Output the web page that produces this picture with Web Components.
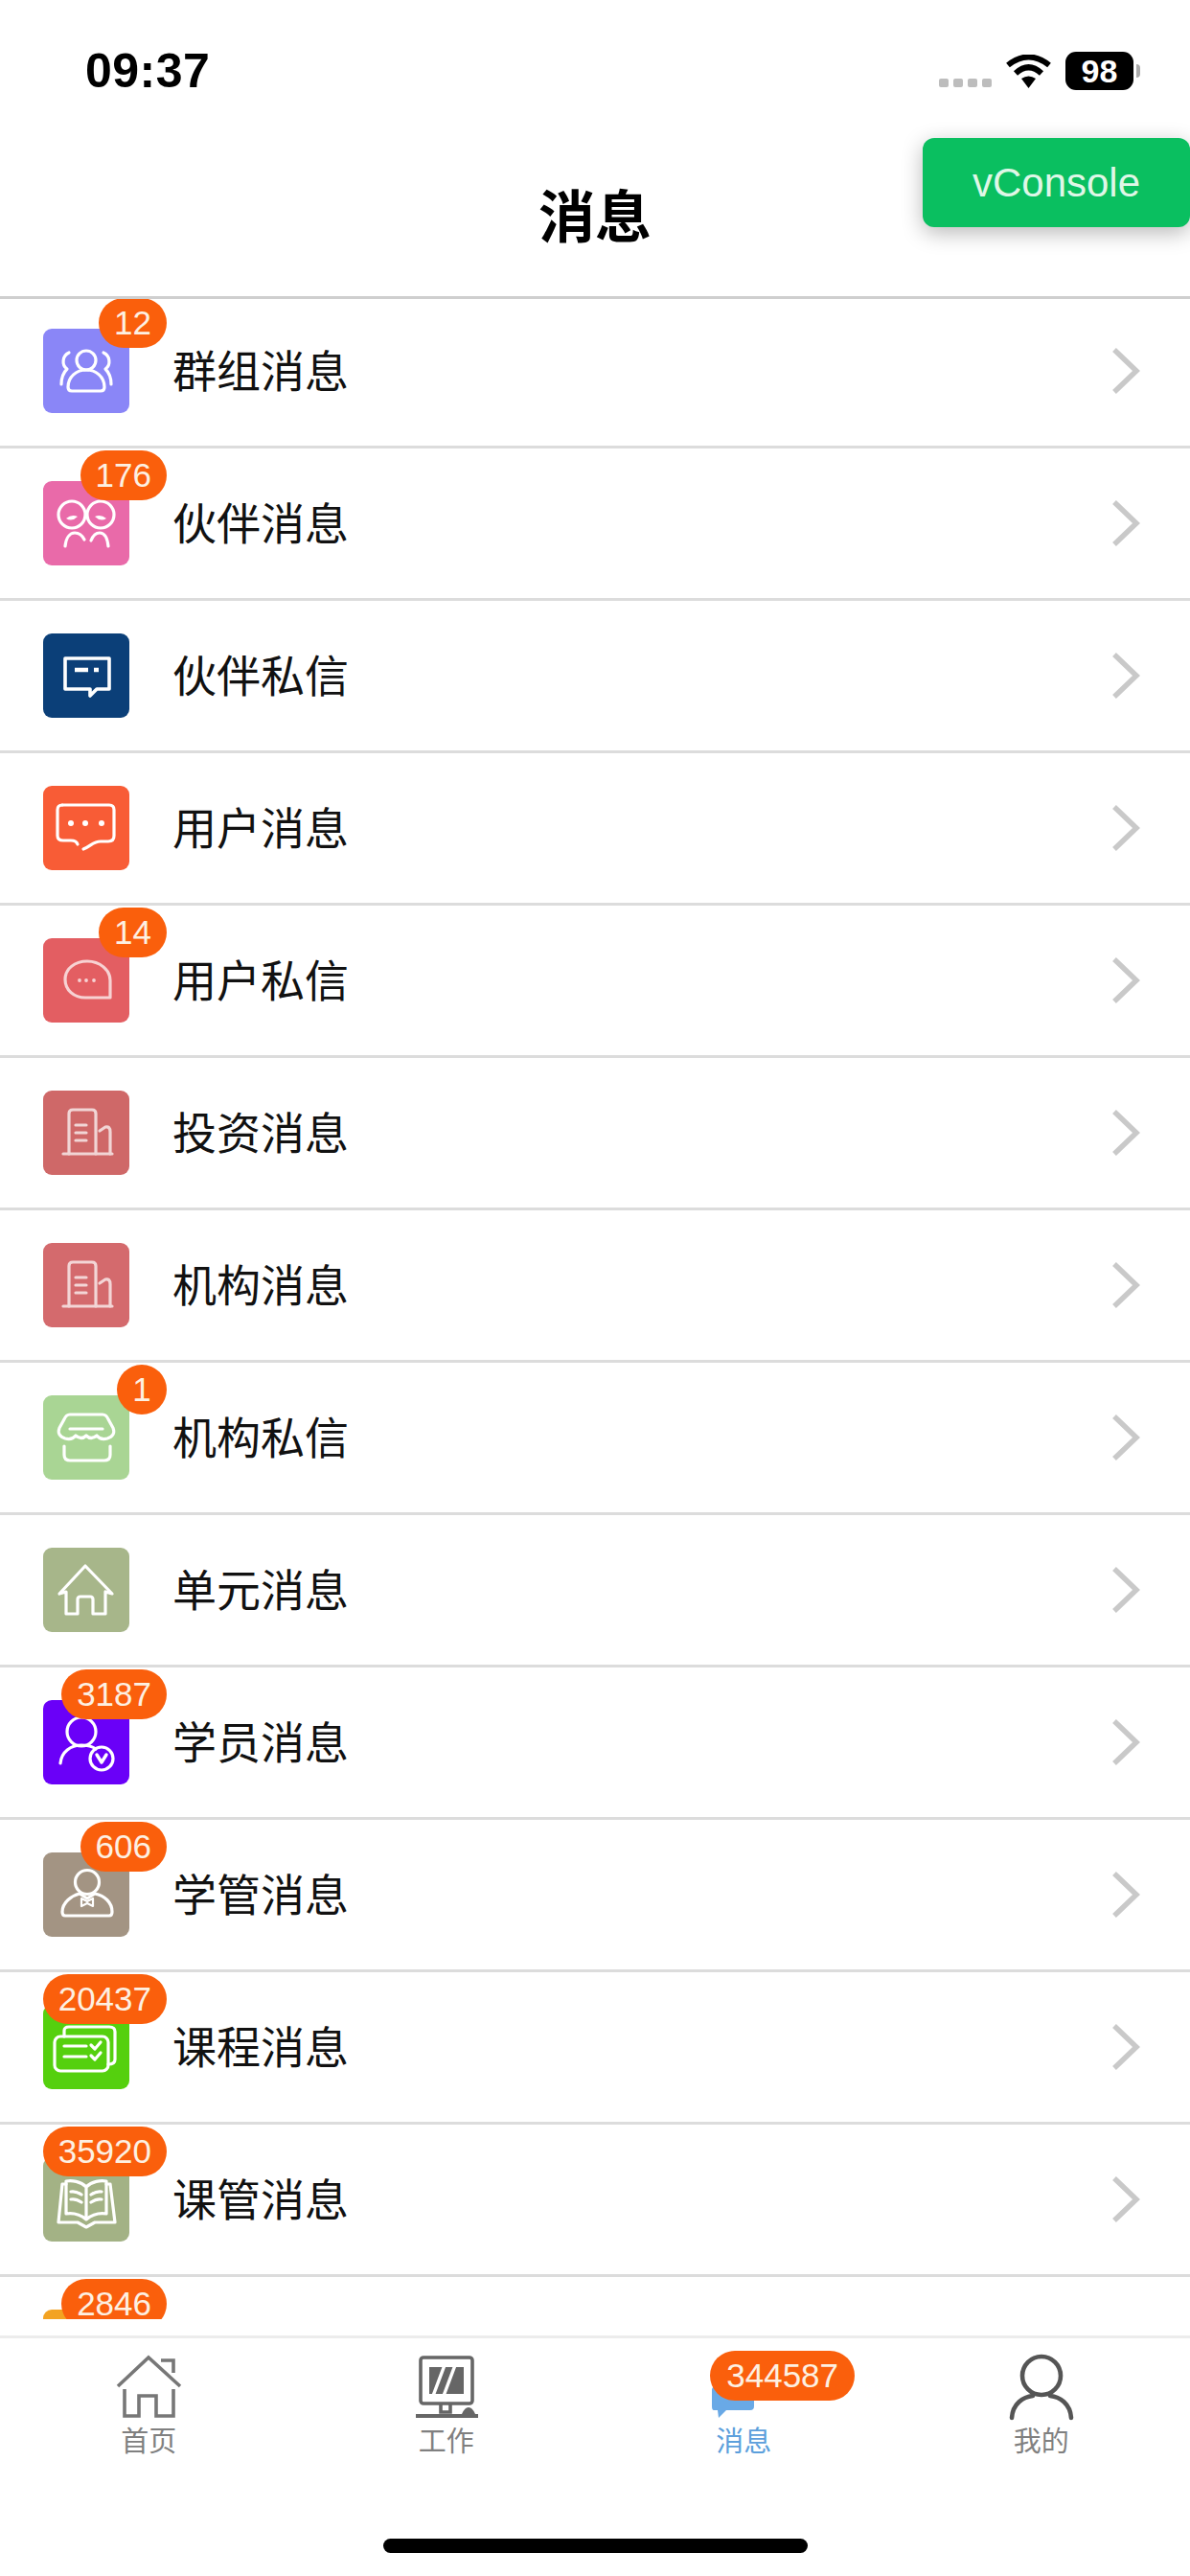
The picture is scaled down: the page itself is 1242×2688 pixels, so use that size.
<!DOCTYPE html>
<html lang="zh">
<head>
<meta charset="utf-8">
<title>消息</title>
<style>
  html, body { margin: 0; padding: 0; background: #fff; }
  body { font-family: "Liberation Sans", "Noto Sans CJK SC", sans-serif; }
</style>
</head>
<body>
<message-app>
  <status-bar slot="top" time="09:37" battery="98"></status-bar>
  <nav-header slot="top">消息</nav-header>
  <vconsole-button slot="top">vConsole</vconsole-button>

  <msg-row icon="group" bg="#8a86f7" count="12">群组消息</msg-row>
  <msg-row icon="partners" bg="#e96aa9" count="176">伙伴消息</msg-row>
  <msg-row icon="note" bg="#0b3f78">伙伴私信</msg-row>
  <msg-row icon="chat" bg="#f85c36">用户消息</msg-row>
  <msg-row icon="bubble" bg="#e35e62" count="14">用户私信</msg-row>
  <msg-row icon="building" bg="#cf6868">投资消息</msg-row>
  <msg-row icon="building" bg="#d46a6d">机构消息</msg-row>
  <msg-row icon="store" bg="#a9d594" count="1">机构私信</msg-row>
  <msg-row icon="house" bg="#a7b68a">单元消息</msg-row>
  <msg-row icon="student" bg="#6a00f8" count="3187">学员消息</msg-row>
  <msg-row icon="manager" bg="#a39483" count="606">学管消息</msg-row>
  <msg-row icon="course" bg="#55d00e" count="20437">课程消息</msg-row>
  <msg-row icon="book" bg="#a3b285" count="35920">课管消息</msg-row>
  <msg-row icon="" bg="#f3a322" count="2846"></msg-row>

  <tab-bar slot="bottom">
    <tab-item label="首页" icon="home"></tab-item>
    <tab-item label="工作" icon="work"></tab-item>
    <tab-item label="消息" icon="message" count="344587" active></tab-item>
    <tab-item label="我的" icon="me"></tab-item>
  </tab-bar>
  <home-indicator slot="bottom"></home-indicator>
</message-app>

<script>
// iconos de la lista, dibujados sobre un cuadro de 90x88
const rowIcons = {
  group: `<circle cx="45" cy="33" r="10"/>
    <path d="M30 65q-4 0-4-4C26 50 35 43 45 43s19 7 19 18q0 4-4 4Z"/>
    <path d="M27 25c-7 3-8 13-2 17-4 4-6 9-6 16"/><path d="M63 25c7 3 8 13 2 17 4 4 6 9 6 16"/>`,
  partners: `<circle cx="30" cy="35" r="14"/><circle cx="60" cy="35" r="14"/>
    <path d="M24 39q6-5 12-2-6 6-12 2Z" fill="currentColor" stroke="none"/>
    <path d="M54 37q6-3 12 2-6 4-12-2Z" fill="currentColor" stroke="none"/>
    <path d="M23 68c1-9 5-14 10-14s8 3 10 7"/><path d="M50 62c2-5 5-8 9-8 5 0 8 5 9 14"/>`,
  note: `<g stroke-width="3.6"><path d="M23 26H69V58H56L49 65V58H23Z"/></g>
    <path d="M33 38H47M53 38H58" stroke-width="4.5" stroke-linecap="butt"/>`,
  chat: `<path d="M20 20H69q5 0 5 5V52q0 6-6 6H60c-8 0-10 5-18 8"/>
    <path d="M20 20q-5 0-5 5V52q0 5 6 5H29c4 0 6 1 7 4"/>
    <g fill="currentColor" stroke="none"><circle cx="29" cy="39" r="3"/><circle cx="44" cy="39" r="3"/><circle cx="61" cy="39" r="3"/></g>`,
  bubble: `<path d="M46 24C59 24 70 33 70 44V62H44C32 62 23 54 23 43S33 24 46 24Z" opacity=".72"/>
    <g fill="currentColor" stroke="none" opacity=".72"><circle cx="38" cy="44" r="1.9"/><circle cx="45" cy="44" r="1.9"/><circle cx="53" cy="44" r="1.9"/></g>`,
  building: `<g opacity=".72"><path d="M27 66V24q0-4 4-4H51q4 0 4 4V66"/><path d="M21 66H72"/>
    <path d="M59 42l6-4q5-1 5 5V66"/><path d="M34 36H45M34 44H45M34 52H45"/></g>`,
  store: `<path d="M30 20H62q4 0 6 5l5 9q3 8-6 11-7 2-11-3-6 5-11 0-5 5-11 0-4 5-11 3-9-3-6-11l5-9q2-5 6-5Z"/>
    <path d="M28 35H62"/><path d="M22 53V62q0 6 6 6H64q6 0 6-6V53"/>`,
  house: `<path d="M17 48 44 19 72 48 65 46V69H52V54q0-3-3-3H39q-3 0-3 3V69H24V46Z"/>`,
  student: `<circle cx="40" cy="33" r="15"/><path d="M18 66c1-12 11-19 22-19 6 0 11 1 15 4"/>
    <circle cx="61" cy="61" r="12"/><path d="M56 57l5 8 5-8" stroke-width="3.4"/>`,
  manager: `<circle cx="46" cy="31" r="12.500"/>
    <path d="M23 66q-3 0-3-4C20 52 30 45 38 43L46 48 54 43C64 45 72 52 72 62q0 4-3 4Z"/>
    <path d="M40 48l6 3 6-3v8l-6-3-6 3Z" stroke-width="2.2"/>`,
  course: `<rect x="12" y="33" width="56" height="36" rx="6"/>
    <path d="M22 33V27q0-4 5-4H69q6 0 6 5V57q0 5-7 5"/>
    <path d="M22 43H45M22 54H45"/><path d="M50 42l4 4 6-7M50 53l4 4 6-7"/>`,
  book: `<path d="M45 31C39 25 30 24 24 25V59C31 58 39 60 45 65 51 60 59 58 66 59V25C60 24 51 25 45 31ZM45 31V65"/>
    <path d="M24 28H20L16 68H36L45 73 54 68H75L70 28H66"/>
    <path d="M29 36q5-1 11 3M29 44q5-1 11 3M50 39q6-4 11-3M50 47q6-4 11-3"/>`
};

// iconos de la barra inferior, cuadro de 90x84
const tabIcons = {
  home: `<g fill="none" stroke="#777" stroke-width="3.6">
    <path d="M13 45 45 15 78 45"/><path d="M58 18H71V31"/>
    <path d="M20 48V76H35V55H53V76H71V48"/></g>`,
  work: `<g fill="none" stroke="#666" stroke-width="3.6">
    <rect x="18" y="15" width="54" height="48" rx="3"/><path d="M39 63V72H49V63"/></g>
    <rect x="27" y="25" width="36" height="28" fill="#666"/>
    <path d="M43 23 31 55M54 23 42 55" stroke="#fff" stroke-width="3.5" fill="none"/>
    <path d="M13 74H78V78H13Z" fill="#666"/><path d="M61 74q3-7 7-7t7 7Z" fill="#666"/>`,
  message: `<path d="M14 44H52q4 0 4 4V66q0 4-4 4H27L19 78 18 70H14Q12 70 12 66V48Z" fill="#69a9e6"/>`,
  me: `<g fill="none" stroke="#555" stroke-width="4.6" stroke-linecap="round">
    <ellipse cx="45" cy="34" rx="20" ry="20"/><path d="M14 78C15 63 26 56 36 55M76 78C75 63 64 56 54 55"/></g>`
};

const appTemplate = document.createElement("template");
appTemplate.innerHTML = `
<style>
  :host { display: flex; flex-direction: column; width: 1242px; height: 2688px; background: #fff; overflow: hidden; position: relative; }
  .top { position: relative; z-index: 2; }
  .list { height: 2111px; margin-top: -3px; overflow: hidden; flex: none; }
  .bottom { flex: 1; display: flex; flex-direction: column; margin-top: 17px; }
</style>
<div class="top"><slot name="top"></slot></div>
<div class="list"><slot></slot></div>
<div class="bottom"><slot name="bottom"></slot></div>`;

class MessageApp extends HTMLElement {
  constructor() {
    super();
    this.attachShadow({ mode: "open" });
    this.shadowRoot.appendChild(appTemplate.content.cloneNode(true));
  }
}
customElements.define("message-app", MessageApp);

const statusTemplate = document.createElement("template");
statusTemplate.innerHTML = `
<style>
  :host { display: flex; align-items: center; justify-content: space-between; height: 148px; padding: 0 52px 0 89px; box-sizing: border-box; color: #000; }
  .time { font: 700 50px/1 "Liberation Sans", sans-serif; letter-spacing: .5px; }
  .right { display: flex; align-items: center; gap: 15px; }
  .signal { display: flex; gap: 5px; margin-top: 25px; }
  .signal i { width: 10px; height: 9px; border-radius: 2px; background: #bdbdbd; }
  .battery { display: flex; align-items: center; gap: 3px; }
  .cell { width: 71px; height: 40px; border-radius: 11px; background: #000; color: #fff; display: flex; align-items: center; justify-content: center; font: 700 34px/1 "Liberation Sans", sans-serif; }
  .nub { width: 4px; height: 14px; border-radius: 0 4px 4px 0; background: #aaa; }
  svg { display: block; }
</style>
<div class="time"></div>
<div class="right">
  <div class="signal"><i></i><i></i><i></i><i></i></div>
  <svg width="47" height="35" viewBox="0 0 47 35" fill="none" stroke="#000" stroke-width="6">
    <path d="M2 11Q23.500-6 45 11"/><path d="M10 19.500Q23.500 7 37 19.500"/>
    <path d="M16 25Q23.500 20 31 25L23.500 35Z" fill="#000" stroke="none"/>
  </svg>
  <div class="battery"><div class="cell"></div><div class="nub"></div></div>
</div>`;

class StatusBar extends HTMLElement {
  constructor() {
    super();
    this.attachShadow({ mode: "open" });
  }
  connectedCallback() {
    this.shadowRoot.appendChild(statusTemplate.content.cloneNode(true));
    this.shadowRoot.querySelector(".time").textContent = this.getAttribute("time");
    this.shadowRoot.querySelector(".cell").textContent = this.getAttribute("battery");
  }
}
customElements.define("status-bar", StatusBar);

const navTemplate = document.createElement("template");
navTemplate.innerHTML = `
<style>
  :host { display: flex; justify-content: center; align-items: center; height: 164px; padding-bottom: 12px; box-sizing: border-box; border-bottom: 3px solid #cfcfcf; background: #fff; }
  .title { font: 700 59px/1 "Noto Sans CJK SC", sans-serif; color: #000; }
</style>
<div class="title"><slot></slot></div>`;

class NavHeader extends HTMLElement {
  constructor() {
    super();
    this.attachShadow({ mode: "open" });
    this.shadowRoot.appendChild(navTemplate.content.cloneNode(true));
  }
}
customElements.define("nav-header", NavHeader);

const consoleTemplate = document.createElement("template");
consoleTemplate.innerHTML = `
<style>
  :host { position: absolute; top: 144px; right: 0; width: 279px; height: 93px; border-radius: 12px; background: #0abf60; color: #dff7e7; box-shadow: 0 6px 22px rgba(0,0,0,.28); display: flex; align-items: center; justify-content: center; font: 400 42px/1 "Liberation Sans", sans-serif; }
</style>
<slot></slot>`;

class VconsoleButton extends HTMLElement {
  constructor() {
    super();
    this.attachShadow({ mode: "open" });
    this.shadowRoot.appendChild(consoleTemplate.content.cloneNode(true));
  }
}
customElements.define("vconsole-button", VconsoleButton);

const badgeTemplate = document.createElement("template");
badgeTemplate.innerHTML = `
<style>
  :host { display: block; position: absolute; height: 52px; min-width: 52px; padding: 0 var(--badge-pad, 16px); box-sizing: border-box; border-radius: 26px; background: #fa5f0c; color: #fdf0e2; text-align: center; font: 400 35px/52px "Liberation Sans", sans-serif; white-space: nowrap; }
</style>
<slot></slot>`;

class CountBadge extends HTMLElement {
  constructor() {
    super();
    this.attachShadow({ mode: "open" });
    this.shadowRoot.appendChild(badgeTemplate.content.cloneNode(true));
  }
}
customElements.define("count-badge", CountBadge);

const rowTemplate = document.createElement("template");
rowTemplate.innerHTML = `
<style>
  :host { display: flex; align-items: center; gap: 45px; height: 159px; padding: 0 51px 0 45px; box-sizing: border-box; border-bottom: 3px solid #dcdcdc; position: relative; }
  .icon { position: relative; width: 90px; height: 88px; border-radius: 9px; color: #fff; flex: none; }
  .icon svg { display: block; width: 90px; height: 88px; fill: none; stroke: currentColor; stroke-width: 3.2; stroke-linejoin: round; stroke-linecap: round; }
  count-badge { right: -39px; top: -32px; }
  .label { flex: 1; padding-bottom: 6px; font: 400 46px/1 "Noto Sans CJK SC", sans-serif; color: #111; }
  .more { display: block; flex: none; }
</style>
<div class="icon"></div>
<div class="label"><slot></slot></div>
<svg class="more" width="32" height="50" viewBox="0 0 32 50" fill="none" stroke="#c9c9c9" stroke-width="5.5"><path d="M4 3 27 25 4 47"/></svg>`;

class MsgRow extends HTMLElement {
  constructor() {
    super();
    this.attachShadow({ mode: "open" });
  }
  connectedCallback() {
    this.shadowRoot.appendChild(rowTemplate.content.cloneNode(true));
    const icon = this.shadowRoot.querySelector(".icon");
    icon.style.background = this.getAttribute("bg");
    const glyph = rowIcons[this.getAttribute("icon")] || "";
    icon.innerHTML = `<svg viewBox="0 0 90 88">${glyph}</svg>`;

    const count = this.getAttribute("count");
    if (count) {
      const badge = document.createElement("count-badge");
      badge.textContent = count;
      icon.appendChild(badge);
    }
  }
}
customElements.define("msg-row", MsgRow);

const tabBarTemplate = document.createElement("template");
tabBarTemplate.innerHTML = `
<style>
  :host { display: grid; grid-template-columns: repeat(4, 1fr); border-top: 3px solid #ececec; padding-top: 5px; }
</style>
<slot></slot>`;

class TabBar extends HTMLElement {
  constructor() {
    super();
    this.attachShadow({ mode: "open" });
    this.shadowRoot.appendChild(tabBarTemplate.content.cloneNode(true));
  }
}
customElements.define("tab-bar", TabBar);

const tabTemplate = document.createElement("template");
tabTemplate.innerHTML = `
<style>
  :host { display: flex; flex-direction: column; align-items: center; color: #808080; }
  :host([active]) { color: #5c9fdc; }
  .pic { position: relative; width: 90px; height: 83px; }
  .pic svg { display: block; }
  count-badge { left: 10px; top: 8px; --badge-pad: 17px; }
  .name { font: 400 29px/34px "Noto Sans CJK SC", sans-serif; }
</style>
<div class="pic"></div>
<div class="name"></div>`;

class TabItem extends HTMLElement {
  constructor() {
    super();
    this.attachShadow({ mode: "open" });
  }
  connectedCallback() {
    this.shadowRoot.appendChild(tabTemplate.content.cloneNode(true));
    const pic = this.shadowRoot.querySelector(".pic");
    pic.innerHTML = `<svg width="90" height="84" viewBox="0 0 90 84">${tabIcons[this.getAttribute("icon")]}</svg>`;
    this.shadowRoot.querySelector(".name").textContent = this.getAttribute("label");

    const count = this.getAttribute("count");
    if (count) {
      const badge = document.createElement("count-badge");
      badge.textContent = count;
      pic.appendChild(badge);
    }
  }
}
customElements.define("tab-item", TabItem);

const indicatorTemplate = document.createElement("template");
indicatorTemplate.innerHTML = `
<style>
  :host { display: block; width: 443px; height: 15px; border-radius: 8px; background: #000; margin: auto auto 24px; }
</style>`;

class HomeIndicator extends HTMLElement {
  constructor() {
    super();
    this.attachShadow({ mode: "open" });
    this.shadowRoot.appendChild(indicatorTemplate.content.cloneNode(true));
  }
}
customElements.define("home-indicator", HomeIndicator);
</script>
</body>
</html>
